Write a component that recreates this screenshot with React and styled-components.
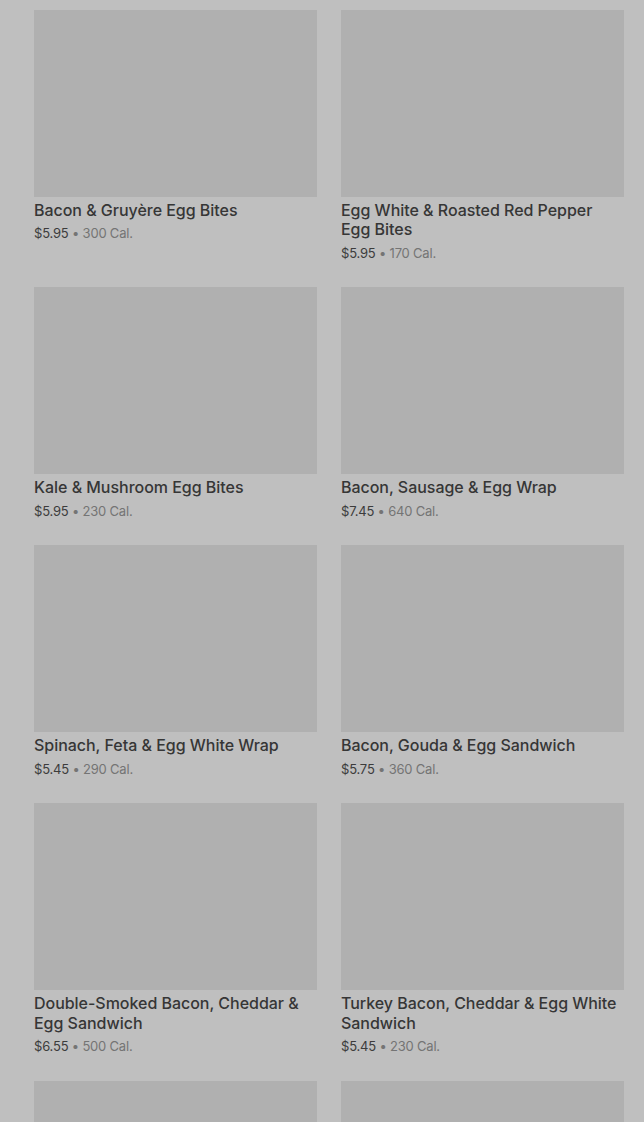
import React from 'react';
import styled, {createGlobalStyle} from 'styled-components';

const GlobalStyle = createGlobalStyle`
    html, body {
        margin: 0;
        padding: 0;
        background: #bfbfbf;
    }
    body {
        font-family: Inter, "Noto Sans", "Liberation Sans", sans-serif;
        -webkit-font-smoothing: antialiased;
    }
`

const Grid = styled.div`
    display: grid;
    grid-template-columns: 283px 283px;
    column-gap: 24px;
    row-gap: 24px;
    padding: 9.6px 20px 0 34px;
    height: 1122px;
    box-sizing: border-box;
    overflow: hidden;
`

const Card = styled.div`
    display: flex;
    flex-direction: column;
`

const Photo = styled.div`
    width: 100%;
    height: 187px;
    background: #b0b0b0;
`

const Name = styled.h3`
    margin: 4.4px 0 0;
    font-size: 16px;
    line-height: 19.5px;
    font-weight: 500;
    color: #363636;
    letter-spacing: -0.03px;
`

const Meta = styled.p`
    margin: 2.6px 0 0;
    font-size: 13px;
    line-height: 20.5px;
    color: #747474;
    letter-spacing: -0.2px;
`

const Price = styled.span`
    color: #3c3c3c;
`

const items = [
    {name: 'Bacon & Gruyère Egg Bites', price: '$5.95', cal: 300},
    {name: 'Egg White & Roasted Red Pepper Egg Bites', price: '$5.95', cal: 170},
    {name: 'Kale & Mushroom Egg Bites', price: '$5.95', cal: 230},
    {name: 'Bacon, Sausage & Egg Wrap', price: '$7.45', cal: 640},
    {name: 'Spinach, Feta & Egg White Wrap', price: '$5.45', cal: 290},
    {name: 'Bacon, Gouda & Egg Sandwich', price: '$5.75', cal: 360},
    {name: 'Double-Smoked Bacon, Cheddar & Egg Sandwich', price: '$6.55', cal: 500},
    {name: 'Turkey Bacon, Cheddar & Egg White Sandwich', price: '$5.45', cal: 230},
    {name: 'Impossible™ Breakfast Sandwich', price: '$5.95', cal: 420},
    {name: 'Sausage, Cheddar & Egg Sandwich', price: '$4.95', cal: 480},
]

const App = () => {
    return (
        <>
            <GlobalStyle />
            <Grid>
                {items.map(item => (
                    <Card key={item.name}>
                        <Photo />
                        <Name>{item.name}</Name>
                        <Meta><Price>{item.price}</Price> • {item.cal} Cal.</Meta>
                    </Card>
                ))}
            </Grid>
        </>
    )
};

export default App;
